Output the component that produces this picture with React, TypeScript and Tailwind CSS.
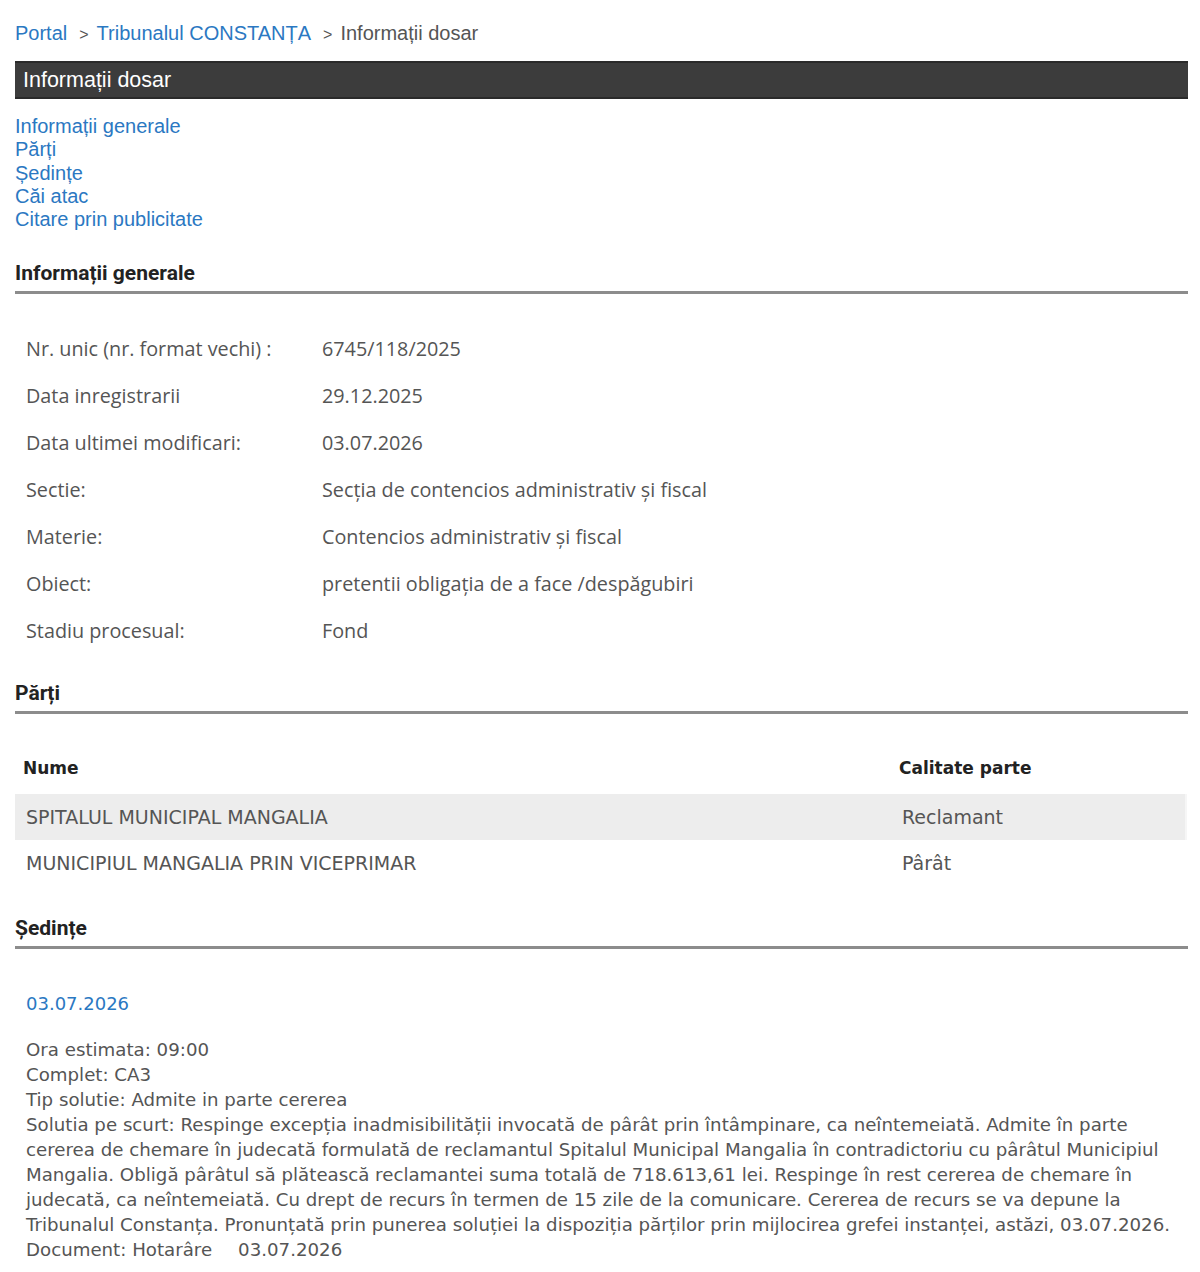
import React from 'react';

// ============================================================
// DATA
// ============================================================

const detalii: [string, string][] = [
  ['Nr. unic (nr. format vechi) :', '6745/118/2025'],
  ['Data inregistrarii', '29.12.2025'],
  ['Data ultimei modificari:', '03.07.2026'],
  ['Sectie:', 'Secția de contencios administrativ și fiscal'],
  ['Materie:', 'Contencios administrativ și fiscal'],
  ['Obiect:', 'pretentii obligația de a face /despăgubiri'],
  ['Stadiu procesual:', 'Fond'],
];

const parti: [string, string][] = [
  ['SPITALUL MUNICIPAL MANGALIA', 'Reclamant'],
  ['MUNICIPIUL MANGALIA PRIN VICEPRIMAR', 'Pârât'],
];

const ancore = ['Informații generale', 'Părți', 'Ședințe', 'Căi atac', 'Citare prin publicitate'];

// ============================================================
// COMPONENTE
// ============================================================

function Titlu({ text, className }: { text: string; className?: string }) {
  return (
    <div className={className}>
      <h2 className="font-['Roboto',sans-serif] text-[21px] font-bold leading-[24px] text-[#222]">{text}</h2>
      <div className="mt-[6px] h-[3px] bg-[#8c8c8c]" />
    </div>
  );
}

function Sep() {
  return <span className="pl-[12px] pr-[8px] text-[16px] leading-[16px] text-[#555]">&gt;</span>;
}

export default function App() {
  return (
    <div className="min-h-[1272px] bg-white pl-[15px] pr-[12px] pt-[21px]">
      <nav className="h-[24px] font-['Liberation_Sans',Arial,sans-serif] text-[20px] leading-[24px]">
        <a className="text-[#2b78c2]">Portal</a>
        <Sep />
        <a className="text-[#2b78c2]">Tribunalul CONSTANȚA</a>
        <Sep />
        <span className="text-[#555]">Informații dosar</span>
      </nav>

      <div className="mt-[16px] flex h-[38px] items-center border-y-2 border-[#2a2a2a] bg-[#3c3c3c] pl-[8px] font-['Liberation_Sans',Arial,sans-serif] text-[21.5px] text-white">
        Informații dosar
      </div>

      <ul className="mt-[16px] font-['Liberation_Sans',Arial,sans-serif] text-[20px] leading-[23.3px] text-[#2b78c2]">
        {ancore.map((a) => (
          <li key={a}>
            <a>{a}</a>
          </li>
        ))}
      </ul>

      <Titlu text="Informații generale" className="mt-[30px]" />

      <div className="mt-[31px] font-['Open_Sans',sans-serif] text-[19.8px] text-[#555]">
        {detalii.map(([k, v]) => (
          <div key={k} className="flex h-[47px] items-center pl-[11px]">
            <div className="w-[296px] shrink-0">{k}</div>
            <div>{v}</div>
          </div>
        ))}
      </div>

      <Titlu text="Părți" className="mt-[27px]" />

      <div className="mt-[28px] mr-[1px] font-['DejaVu_Sans',sans-serif]">
        <div className="flex h-[52px] items-center text-[17px] font-bold text-[#222]">
          <div className="w-[884px] pl-[8px]">Nume</div>
          <div>Calitate parte</div>
        </div>
        {parti.map(([nume, calitate], i) => (
          <div
            key={nume}
            className={`flex h-[46px] items-center text-[19px] text-[#555] ${
              i === 0 ? 'border-r-2 border-[#f6f6f6] bg-[#ededed]' : ''
            }`}
          >
            <div className="w-[887px] pl-[11px]">{nume}</div>
            <div>{calitate}</div>
          </div>
        ))}
      </div>

      <Titlu text="Ședințe" className="mt-[30px]" />

      <div className="pl-[11px] font-['DejaVu_Sans',sans-serif] text-[#555]">
        <a className="mt-[43px] block text-[18px] leading-[24px] text-[#2b78c2]">03.07.2026</a>
        <div className="mt-[21px] w-[1160px] text-[18.2px] leading-[25px]">
          <div>Ora estimata: 09:00</div>
          <div>Complet: CA3</div>
          <div>Tip solutie: Admite in parte cererea</div>
          <div>
            Solutia pe scurt: Respinge excepția inadmisibilității invocată de pârât prin întâmpinare, ca neîntemeiată.
            Admite în parte cererea de chemare în judecată formulată de reclamantul Spitalul Municipal Mangalia în
            contradictoriu cu pârâtul Municipiul Mangalia. Obligă pârâtul să plătească reclamantei suma totală de
            718.613,61 lei. Respinge în rest cererea de chemare în judecată, ca neîntemeiată. Cu drept de recurs în
            termen de 15 zile de la comunicare. Cererea de recurs se va depune la Tribunalul Constanța. Pronunțată prin
            punerea soluției la dispoziția părților prin mijlocirea grefei instanței, astăzi, 03.07.2026.
          </div>
          <div>
            Document: Hotarâre<span className="inline-block w-[26px]" />03.07.2026
          </div>
        </div>
      </div>
    </div>
  );
}
